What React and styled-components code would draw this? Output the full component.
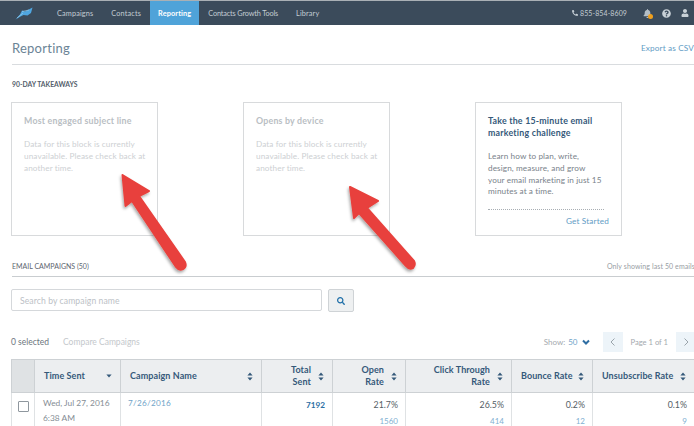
import React from 'react';
import styled, { createGlobalStyle } from 'styled-components';
import { FaBell, FaPhoneAlt, FaQuestionCircle, FaSearch, FaUser } from 'react-icons/fa';

const GlobalStyle = createGlobalStyle`
  html, body {
    margin: 0;
    background: #fff;
    overflow: hidden;
  }
  * {
    box-sizing: border-box;
  }
`;

const Page = styled.div`
  position: relative;
  width: 694px;
  height: 426px;
  overflow: hidden;
  font-family: Lato, "Open Sans", sans-serif;
  color: #5f6b76;
`;

const TopBar = styled.header`
  display: flex;
  align-items: stretch;
  height: 25px;
  border-top: 1px solid #a9b0b5;
  background: #3b4b5b;
  font-size: 7.3px;
  letter-spacing: 0.15px;
  color: #c3ccd3;
`;

const Logo = styled.div`
  display: flex;
  align-items: center;
  width: 48px;
  padding-left: 15px;
`;

const NavItem = styled.a`
  display: flex;
  align-items: center;
  padding: 0 ${(props) => (props.$active ? 8 : 9)}px;
  background: ${(props) => (props.$active ? '#4fa3d9' : 'transparent')};
  color: ${(props) => (props.$active ? '#fff' : '#c3ccd3')};
  font-weight: ${(props) => (props.$active ? 700 : 400)};
  letter-spacing: ${(props) => (props.$tight ? '-0.15px' : 'inherit')};
`;

const BarRight = styled.div`
  display: flex;
  align-items: center;
  margin-left: auto;
  padding-right: 5px;
`;

const Phone = styled.span`
  display: flex;
  align-items: center;
  gap: 2px;
  margin-right: 16px;
  font-size: 7px;
  letter-spacing: 0.1px;
`;

const BellWrap = styled.span`
  position: relative;
  display: flex;
  margin-right: 10px;
  color: #b4bec6;
  &::after {
    content: '';
    position: absolute;
    right: -1px;
    bottom: -1px;
    width: 5px;
    height: 5px;
    border-radius: 50%;
    background: #f0a01e;
  }
`;

const BarIcon = styled.span`
  display: flex;
  margin-left: ${(props) => props.$gap || 0}px;
  color: #c9d1d7;
`;

const Main = styled.main`
  padding-left: 12px;
`;

const TitleRow = styled.div`
  display: flex;
  align-items: center;
  justify-content: space-between;
  height: 40px;
  padding-top: 6px;
  border-bottom: 1px solid #d9dcdf;
`;

const Title = styled.h1`
  margin: 0;
  font-size: 13px;
  font-weight: 400;
  letter-spacing: 0.25px;
  color: #6b8496;
`;

const TextLink = styled.a`
  font-size: 8.2px;
  letter-spacing: 0.15px;
  color: #5f9cc5;
  white-space: nowrap;
`;

const SectionLabel = styled.div`
  padding-top: 15px;
  height: 37px;
  font-size: 6.8px;
  font-weight: 700;
  color: #55606b;
`;

const Cards = styled.div`
  display: flex;
  gap: 85px;
  margin-left: -1px;
`;

const Card = styled.section`
  display: flex;
  flex-direction: column;
  width: 147px;
  height: 134px;
  padding: 12px 10px 0 12px;
  border: 1px solid #d8dadc;
`;

const CardTitle = styled.h3`
  margin: 0 0 12px;
  font-size: 8.8px;
  line-height: 12px;
  font-weight: 700;
  letter-spacing: 0.22px;
  color: ${(props) => (props.$muted ? '#b9bec3' : '#35597a')};
`;

const CardText = styled.p`
  max-width: ${(props) => (props.$muted ? 'none' : '114px')};
  margin: 0;
  font-size: 8.2px;
  line-height: 11.8px;
  letter-spacing: 0.1px;
  color: ${(props) => (props.$muted ? '#cdd0d3' : '#79828a')};
`;

const CardFoot = styled.div`
  margin: 11px 7px 0 0;
  padding-top: 6px;
  border-top: 1px dotted #a8aeb3;
  font-size: 8.2px;
  line-height: 11px;
  text-align: right;
`;

const GetStarted = styled(TextLink)`
  margin-right: -5px;
`;

const CampaignsHead = styled.div`
  display: flex;
  align-items: center;
  justify-content: space-between;
  height: 41px;
  padding-top: 20px;
  border-bottom: 1px solid #c9cdd0;
`;

const CampaignsLabel = styled.span`
  font-size: 7px;
  color: #5d6670;
`;

const OnlyShowing = styled.span`
  margin-right: -1px;
  font-size: 7px;
  letter-spacing: 0.1px;
  white-space: nowrap;
  color: #979da3;
`;

const SearchRow = styled.div`
  display: flex;
  gap: 6px;
  margin-top: 12px;
`;

const SearchField = styled.div`
  display: flex;
  align-items: center;
  width: 311px;
  height: 22px;
  margin-left: -1px;
  padding: 1px 0 0 8px;
  border: 1px solid #d5d8db;
  border-radius: 2px;
  font-size: 8.6px;
  letter-spacing: 0.1px;
  color: #bcc1c6;
`;

const SearchButton = styled.button`
  display: flex;
  align-items: center;
  justify-content: center;
  width: 26px;
  height: 23px;
  padding: 0;
  border: 1px solid #cfd3d6;
  border-radius: 2px;
  background: #eef0f1;
  color: #1f6fa8;
`;

const ToolRow = styled.div`
  display: flex;
  align-items: center;
  height: 35px;
  margin-top: 12px;
  font-size: 8.5px;
`;

const Selected = styled.span`
  width: 52px;
  margin-left: -1px;
  color: #6c757d;
`;

const Compare = styled.span`
  color: #c4c8cc;
`;

const Show = styled.span`
  display: flex;
  align-items: center;
  gap: 3px;
  margin-left: auto;
  font-size: 8px;
  color: #a4a9ae;
`;

const ShowValue = styled.span`
  color: #6fa3c8;
`;

const PageButton = styled.span`
  display: flex;
  align-items: center;
  justify-content: center;
  width: 20px;
  height: 20px;
  background: #edf4f9;
  color: #9aa4ab;
`;

const Pager = styled.div`
  display: flex;
  align-items: center;
  gap: 8px;
  margin-left: 12px;
  margin-right: -2px;
  font-size: 7.6px;
  color: #a4a9ae;
`;

const Table = styled.table`
  width: 683px;
  margin-left: -1px;
  border-collapse: collapse;
  table-layout: fixed;
  font-size: 8.8px;
`;

const HeadCell = styled.th`
  height: 33px;
  padding: 0 8px 0 9px;
  border: 1px solid #cdd1d4;
  border-right-color: ${(props) => (props.$last ? 'transparent' : '#cdd1d4')};
  background: ${(props) => (props.$corner ? '#dfe2e4' : '#eceef0')};
  font-size: 9px;
  line-height: 12.5px;
  font-weight: 700;
  letter-spacing: 0.08px;
  white-space: nowrap;
  color: #35597a;
`;

const HeadInner = styled.div`
  display: flex;
  align-items: center;
  justify-content: ${(props) => (props.$right ? 'flex-end' : 'space-between')};
  gap: ${(props) => (props.$right ? 7 : 4)}px;
  text-align: ${(props) => (props.$right ? 'right' : 'left')};
`;

const BodyCell = styled.td`
  height: 40px;
  padding: 4px 7px 0 8px;
  vertical-align: top;
  border-left: 1px solid #dfe2e4;
  border-right: 1px solid #dfe2e4;
  border-bottom: 1px solid #dfe2e4;
  text-align: ${(props) => (props.$right ? 'right' : 'left')};
  line-height: 15.5px;
  color: #858d94;
`;

const DateText = styled.div`
  margin-top: -1px;
  font-size: 8.4px;
  line-height: 15px;
`;

const Checkbox = styled.span`
  display: block;
  width: 11px;
  height: 11px;
  margin: 4px 0 0 -2px;
  border: 1px solid #8f979e;
  border-radius: 1px;
`;

const Rate = styled.div`
  color: #545d65;
`;

const Count = styled.div`
  margin-top: 1px;
  font-size: 8px;
  color: #7fb0d2;
`;

const StrongLink = styled.span`
  font-size: 8.2px;
  font-weight: 700;
  color: #2b6ea3;
`;

const PlainLink = styled.div`
  margin: -1px 0 0 -1px;
  font-size: 8.2px;
  letter-spacing: 0.25px;
  color: #6fa3c8;
`;

const ArrowLayer = styled.svg`
  position: absolute;
  top: 0;
  left: 0;
  pointer-events: none;
`;

const SortIcon = () => (
  <svg width="6" height="9" viewBox="0 0 6 9" style={{ flex: 'none' }}>
    <path d="M3 0.5 5.6 3.5H0.4zM3 8.5 0.4 5.5H5.6z" fill="#35597a" />
  </svg>
);

const SortDown = () => (
  <svg width="6" height="4" viewBox="0 0 6 4" style={{ flex: 'none' }}>
    <path d="M0.4 0.5H5.6L3 3.5z" fill="#35597a" />
  </svg>
);

const Chevron = ({ d, color = '#9aa4ab', w = 2 }) => (
  <svg width="10" height="10" viewBox="0 0 10 10">
    <path d={d} fill="none" stroke={color} strokeWidth={w} />
  </svg>
);

const RedArrow = ({ d }) => <path d={d} fill="#e8413c" stroke="#e8413c" strokeWidth="2" strokeLinejoin="round" />;

const columns = [
  { key: 'time', width: 86, label: 'Time Sent', sort: 'down' },
  { key: 'name', width: 141, label: 'Campaign Name' },
  { key: 'total', width: 71, label: ['Total', 'Sent'], right: true },
  { key: 'open', width: 73, label: ['Open', 'Rate'], right: true },
  { key: 'click', width: 106, label: ['Click Through', 'Rate'], right: true },
  { key: 'bounce', width: 81, label: 'Bounce Rate' },
  { key: 'unsub', width: 102, label: 'Unsubscribe Rate', last: true },
];

const rates = [
  { key: 'open', rate: '21.7%', count: '1560' },
  { key: 'click', rate: '26.5%', count: '414' },
  { key: 'bounce', rate: '0.2%', count: '12' },
  { key: 'unsub', rate: '0.1%', count: '9' },
];

export default function App() {
  return (
    <Page>
      <GlobalStyle />
      <TopBar>
        <Logo>
          <svg width="18" height="13" viewBox="0 0 18 13">
            <path d="M0.500 12.500 5 7.500 7 3.500 10 4.500 17.500 0.500 16 6 12.500 8.500 8.500 8 5.500 9.500z" fill="#4fa6e0" />
            <path d="M2 11 8 6M7 4.500 14 3" stroke="#a5d5f2" strokeWidth="0.6" fill="none" />
          </svg>
        </Logo>
        <NavItem>Campaigns</NavItem>
        <NavItem>Contacts</NavItem>
        <NavItem $active>Reporting</NavItem>
        <NavItem $tight>Contacts Growth Tools</NavItem>
        <NavItem>Library</NavItem>
        <BarRight>
          <Phone>
            <FaPhoneAlt size={6} />
            855-854-8609
          </Phone>
          <BellWrap>
            <FaBell size={9} />
          </BellWrap>
          <BarIcon>
            <FaQuestionCircle size={9} />
          </BarIcon>
          <BarIcon $gap={10}>
            <FaUser size={8} />
          </BarIcon>
        </BarRight>
      </TopBar>

      <Main>
        <TitleRow>
          <Title>Reporting</Title>
          <TextLink>Export as CSV</TextLink>
        </TitleRow>

        <SectionLabel>90-DAY TAKEAWAYS</SectionLabel>

        <Cards>
          <Card>
            <CardTitle $muted>Most engaged subject line</CardTitle>
            <CardText $muted>Data for this block is currently unavailable. Please check back at another time.</CardText>
          </Card>
          <Card>
            <CardTitle $muted>Opens by device</CardTitle>
            <CardText $muted>Data for this block is currently unavailable. Please check back at another time.</CardText>
          </Card>
          <Card>
            <CardTitle>Take the 15-minute email marketing challenge</CardTitle>
            <CardText>Learn how to plan, write, design, measure, and grow your email marketing in just 15 minutes at a time.</CardText>
            <CardFoot>
              <GetStarted>Get Started</GetStarted>
            </CardFoot>
          </Card>
        </Cards>

        <CampaignsHead>
          <CampaignsLabel>EMAIL CAMPAIGNS (50)</CampaignsLabel>
          <OnlyShowing>Only showing last 50 emails</OnlyShowing>
        </CampaignsHead>

        <SearchRow>
          <SearchField>Search by campaign name</SearchField>
          <SearchButton>
            <FaSearch size={8} />
          </SearchButton>
        </SearchRow>

        <ToolRow>
          <Selected>0 selected</Selected>
          <Compare>Compare Campaigns</Compare>
          <Show>
            Show: <ShowValue>50</ShowValue>
            <Chevron d="M2 3.500 5 6.500 8 3.500" color="#2f6ea3" />
          </Show>
          <Pager>
            <PageButton>
              <Chevron d="M6.500 1.500 3 5 6.500 8.500" w={1} />
            </PageButton>
            Page 1 of 1
            <PageButton>
              <Chevron d="M3.500 1.500 7 5 3.500 8.500" w={1} />
            </PageButton>
          </Pager>
        </ToolRow>

        <Table>
          <colgroup>
            <col style={{ width: 23 }} />
            {columns.map((col) => (
              <col key={col.key} style={{ width: col.width }} />
            ))}
          </colgroup>
          <thead>
            <tr>
              <HeadCell $corner />
              {columns.map((col) => (
                <HeadCell key={col.key} $last={col.last}>
                  <HeadInner $right={col.right}>
                    <span>
                      {Array.isArray(col.label) ? (
                        <>
                          {col.label[0]}
                          <br />
                          {col.label[1]}
                        </>
                      ) : (
                        col.label
                      )}
                    </span>
                    {col.sort === 'down' ? <SortDown /> : <SortIcon />}
                  </HeadInner>
                </HeadCell>
              ))}
            </tr>
          </thead>
          <tbody>
            <tr>
              <BodyCell>
                <Checkbox />
              </BodyCell>
              <BodyCell>
                <DateText>
                  Wed, Jul 27, 2016
                  <br />
                  6:38 AM
                </DateText>
              </BodyCell>
              <BodyCell>
                <PlainLink>7/26/2016</PlainLink>
              </BodyCell>
              <BodyCell $right>
                <StrongLink>7192</StrongLink>
              </BodyCell>
              {rates.map((item) => (
                <BodyCell key={item.key} $right>
                  <Rate>{item.rate}</Rate>
                  <Count>{item.count}</Count>
                </BodyCell>
              ))}
            </tr>
          </tbody>
        </Table>
      </Main>

      {/* callout arrows drawn over the cards */}
      <ArrowLayer width="694" height="426" viewBox="0 0 694 426">
        <defs>
          <filter id="arrowShadow" x="-30%" y="-30%" width="160%" height="160%">
            <feDropShadow dx="-1" dy="2" stdDeviation="1.5" floodColor="#000" floodOpacity="0.35" />
          </filter>
        </defs>
        <g filter="url(#arrowShadow)">
          <RedArrow d="M122.500 175 149 191 139 196 185 262 Q187 267 183 269 Q179 271 176 267 L132 201 125.500 206z" />
          <RedArrow d="M350 187 378 201 367 208 414 261 Q416 265 413 268 Q409 270 406 266 L359 213 354 218z" />
        </g>
      </ArrowLayer>
    </Page>
  );
}
